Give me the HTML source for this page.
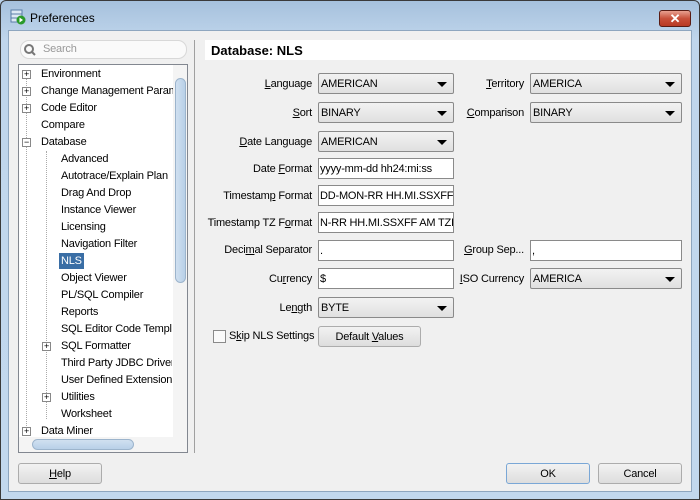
<!DOCTYPE html>
<html><head><style>
*{box-sizing:border-box;margin:0;padding:0}
body{width:700px;height:500px;position:relative;overflow:hidden;font-family:"Liberation Sans",sans-serif;font-size:11px;letter-spacing:-0.2px;color:#000;background:#b9d1ea}
.a{position:absolute}
.frame{left:0;top:0;width:700px;height:500px;background:linear-gradient(#a6c1dd,#c0d6ec 40px,#c2d8ee);border:1px solid #3a3a3a;border-radius:6px 6px 0 0}
.client{left:8px;top:30px;width:684px;height:462px;background:#f0f0f0;border:1px solid #8ea6bf}
.lbl{position:absolute;text-align:right;white-space:nowrap}
.combo{position:absolute;height:21px;border:1px solid #8a8a8a;border-radius:2px;background:linear-gradient(#f2f2f2,#e0e0e0);padding:4px 2px;white-space:nowrap}
.combo:after{content:"";position:absolute;right:6px;top:8px;border-left:5px solid transparent;border-right:5px solid transparent;border-top:5px solid #000}
.txt{position:absolute;height:21px;border:1px solid #8a8a8a;background:#fff;padding:4px 1px;white-space:nowrap;overflow:hidden}
.btn{position:absolute;height:21px;border:1px solid #acacac;border-radius:3px;background:linear-gradient(#f2f2f2,#dddddd);text-align:center;padding-top:4px}
.ti{position:absolute;white-space:nowrap}
.pm{position:absolute;width:9px;height:9px;border:1px solid #888;background:#fff;font-size:9px;line-height:7px;text-align:center}
</style></head><body>
<div class="a frame"></div>
<svg class="a" style="left:10px;top:9px" width="16" height="16"><rect x="1" y="1" width="11" height="12" fill="#dde8f4" stroke="#5a7ea8"/><line x1="1" y1="5" x2="12" y2="5" stroke="#5a7ea8"/><line x1="1" y1="9" x2="12" y2="9" stroke="#5a7ea8"/><circle cx="11" cy="11" r="4.5" fill="#2a9a2a"/><path d="M9.5 8.5 L13 11 L9.5 13.5Z" fill="#fff"/></svg>
<div class="a" style="left:30px;top:11px;font-size:12px;letter-spacing:0">Preferences</div>
<div class="a" style="left:659px;top:10px;width:32px;height:17px;border:1px solid #5a1c14;border-radius:3px;background:linear-gradient(#e8a090,#c8503a 50%,#b83a24);color:#fff;font-weight:bold;text-align:center;font-size:13px;line-height:15px">✕</div>
<div class="a client"></div>
<div class="a" style="left:20px;top:40px;width:167px;height:19px;border:1px solid #d8d8d8;border-radius:9px;background:#fafafa"></div>
<svg class="a" style="left:23px;top:43px" width="14" height="14"><circle cx="6" cy="6" r="4" fill="none" stroke="#777" stroke-width="2"/><line x1="9" y1="9" x2="12" y2="12" stroke="#777" stroke-width="2"/></svg>
<div class="a" style="left:43px;top:43px;color:#999">Search</div>
<div class="a" style="left:18px;top:64px;width:170px;height:389px;border:1px solid #828790;background:#fff"></div>
<div class="a" style="left:173px;top:65px;width:14px;height:372px;background:#f4f4f4"></div>
<div class="a" style="left:175px;top:78px;width:11px;height:205px;border-radius:6px;background:linear-gradient(90deg,#d0e0f0,#b8d0e8);border:1px solid #9cb4cc"></div>
<div class="a" style="left:19px;top:437px;width:168px;height:15px;background:#f4f4f4"></div>
<div class="a" style="left:32px;top:439px;width:102px;height:11px;border-radius:6px;background:linear-gradient(#d0e0f0,#b8d0e8);border:1px solid #9cb4cc"></div>
<div class="a" style="left:26px;top:74px;height:360px;border-left:1px dotted #aaa"></div>
<div class="a" style="left:46px;top:151px;height:268px;border-left:1px dotted #aaa"></div>
<div class="pm" style="left:22px;top:70px">+</div><div class="ti" style="left:41px;top:68px">Environment</div>
<div class="pm" style="left:22px;top:87px">+</div><div class="ti" style="left:41px;top:85px;width:132px;overflow:hidden">Change Management Parameters</div>
<div class="pm" style="left:22px;top:104px">+</div><div class="ti" style="left:41px;top:102px">Code Editor</div>
<div class="ti" style="left:41px;top:119px">Compare</div>
<div class="pm" style="left:22px;top:138px">−</div><div class="ti" style="left:41px;top:136px">Database</div>
<div class="ti" style="left:61px;top:153px">Advanced</div>
<div class="ti" style="left:61px;top:170px">Autotrace/Explain Plan</div>
<div class="ti" style="left:61px;top:187px">Drag And Drop</div>
<div class="ti" style="left:61px;top:204px">Instance Viewer</div>
<div class="ti" style="left:61px;top:221px">Licensing</div>
<div class="ti" style="left:61px;top:238px">Navigation Filter</div>
<div class="ti" style="left:59px;top:253px;background:#3a6ea5;color:#fff;padding:2px 2px">NLS</div>
<div class="ti" style="left:61px;top:272px">Object Viewer</div>
<div class="ti" style="left:61px;top:289px">PL/SQL Compiler</div>
<div class="ti" style="left:61px;top:306px">Reports</div>
<div class="ti" style="left:61px;top:323px;width:111px;overflow:hidden">SQL Editor Code Templates</div>
<div class="pm" style="left:42px;top:342px">+</div><div class="ti" style="left:61px;top:340px">SQL Formatter</div>
<div class="ti" style="left:61px;top:357px;width:111px;overflow:hidden">Third Party JDBC Drivers</div>
<div class="ti" style="left:61px;top:374px;width:111px;overflow:hidden">User Defined Extensions</div>
<div class="pm" style="left:42px;top:393px">+</div><div class="ti" style="left:61px;top:391px">Utilities</div>
<div class="ti" style="left:61px;top:408px">Worksheet</div>
<div class="pm" style="left:22px;top:427px">+</div><div class="ti" style="left:41px;top:425px">Data Miner</div>
<div class="a" style="left:194px;top:40px;height:413px;border-left:1px solid #a0a0a0"></div>
<div class="a" style="left:205px;top:40px;width:485px;height:20px;background:#fff;font-weight:bold;font-size:13px;letter-spacing:0;padding:3px 6px">Database: NLS</div>
<div class="lbl" style="right:388px;top:78px"><u>L</u>anguage</div>
<div class="combo" style="left:318px;top:73px;width:136px">AMERICAN</div>
<div class="lbl" style="right:176px;top:78px"><u>T</u>erritory</div>
<div class="combo" style="left:530px;top:73px;width:152px">AMERICA</div>
<div class="lbl" style="right:388px;top:107px"><u>S</u>ort</div>
<div class="combo" style="left:318px;top:102px;width:136px">BINARY</div>
<div class="lbl" style="right:176px;top:107px"><u>C</u>omparison</div>
<div class="combo" style="left:530px;top:102px;width:152px">BINARY</div>
<div class="lbl" style="right:388px;top:136px"><u>D</u>ate Language</div>
<div class="combo" style="left:318px;top:131px;width:136px">AMERICAN</div>
<div class="lbl" style="right:388px;top:163px">Date <u>F</u>ormat</div>
<div class="txt" style="left:318px;top:158px;width:136px">yyyy-mm-dd hh24:mi:ss</div>
<div class="lbl" style="right:388px;top:190px">Timestam<u>p</u> Format</div>
<div class="txt" style="left:318px;top:185px;width:136px">DD-MON-RR HH.MI.SSXFF AM</div>
<div class="lbl" style="right:388px;top:217px">Timestamp TZ F<u>o</u>rmat</div>
<div class="txt" style="left:318px;top:212px;width:136px">N-RR HH.MI.SSXFF AM TZR</div>
<div class="lbl" style="right:388px;top:244px">Deci<u>m</u>al Separator</div>
<div class="txt" style="left:318px;top:240px;width:136px">.</div>
<div class="lbl" style="right:176px;top:244px"><u>G</u>roup Sep...</div>
<div class="txt" style="left:530px;top:240px;width:152px">,</div>
<div class="lbl" style="right:388px;top:273px">Cu<u>r</u>rency</div>
<div class="txt" style="left:318px;top:268px;width:136px">$</div>
<div class="lbl" style="right:176px;top:273px"><u>I</u>SO Currency</div>
<div class="combo" style="left:530px;top:268px;width:152px">AMERICA</div>
<div class="lbl" style="right:388px;top:302px">Le<u>n</u>gth</div>
<div class="combo" style="left:318px;top:297px;width:136px">BYTE</div>
<div class="a" style="left:213px;top:330px;width:13px;height:13px;border:1px solid #8a8a8a;background:#fafafa"></div>
<div class="lbl" style="left:229px;top:330px">S<u>k</u>ip NLS Settings</div>
<div class="btn" style="left:318px;top:326px;width:103px">Default <u>V</u>alues</div>
<div class="btn" style="left:18px;top:463px;width:84px"><u>H</u>elp</div>
<div class="btn" style="left:506px;top:463px;width:84px;border-color:#7aa7d6">OK</div>
<div class="btn" style="left:598px;top:463px;width:84px">Cancel</div>
</body></html>
